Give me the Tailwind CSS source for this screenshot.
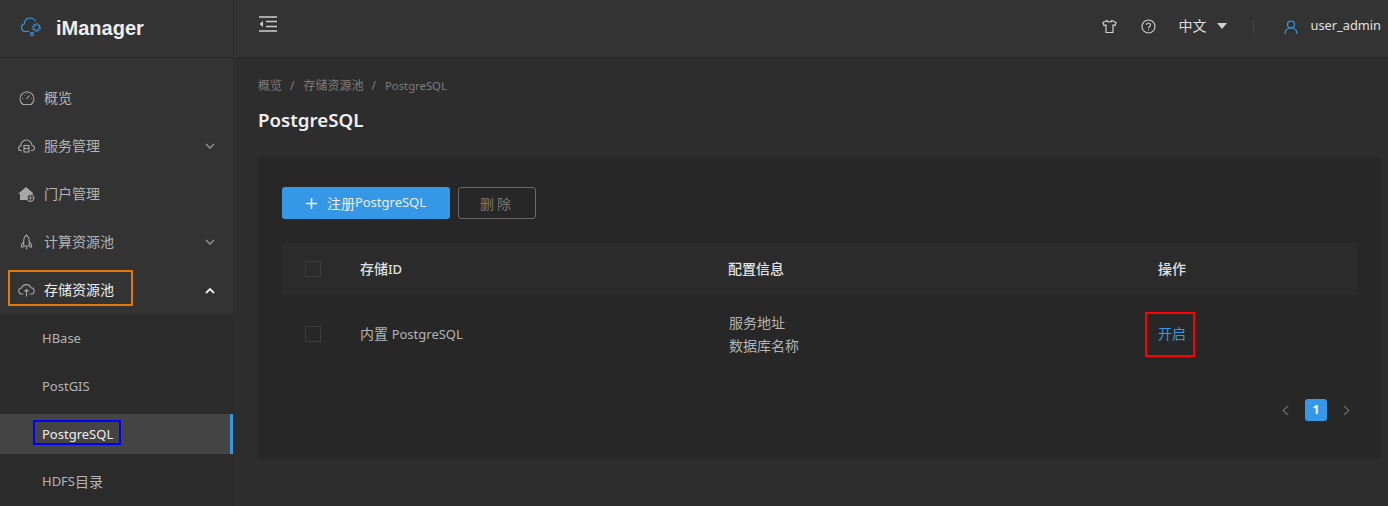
<!DOCTYPE html>
<html lang="zh">
<head>
    <meta charset="UTF-8">
    <title>iManager</title>
    <script src="https://cdn.jsdelivr.net/npm/@tailwindcss/browser@4"></script>
</head>
<body class="bg-[#2d2d2d] h-[506px] w-[1388px] overflow-hidden flex font-['Noto_Sans','Noto_Sans_CJK_SC',sans-serif] text-[13px]">
    <!-- Sidebar -->
    <aside class="w-[234px] h-[506px] shrink-0 bg-[#333333] border-r border-[#2b2b2b] flex flex-col">
        <div class="h-[58px] shrink-0 border-b border-[#2a2a2a] flex items-center pl-5 gap-[12px]">
            <svg class="mb-[3px]" width="24" height="20" viewBox="0 0 24 20" fill="none" stroke="#3498e6" stroke-width="1.100">
                <path d="M9 14.500H5a4 4 0 0 1-.6-7.800A5.800 5.800 0 0 1 15.500 4.500"/>
                <circle cx="16.500" cy="10.500" r="3.200" stroke-width="2.200" stroke-dasharray="1.600 0.800"/>
                <circle cx="12" cy="17" r="1.600"/>
            </svg>
            <span class="text-[20px] font-bold text-[#eeeeee] leading-none font-['Liberation_Sans',sans-serif] mb-[1px]">iManager</span>
        </div>
        <nav class="mt-4 flex flex-col text-[#b4b4b4] text-[14px]">
            <a class="h-12 flex items-center pl-[19px]">
                <svg class="mr-[9px]" width="16" height="16" viewBox="0 0 16 16" fill="none" stroke="#a8a8a8" stroke-width="1.100"><path d="M4 14.500A7 7 0 1 1 12 14.500Z"/><path d="M7.500 9l3-3.500M3.500 8.500h.8M11.800 8.500h.8M5 4.800l.5.500M8 3.200V4"/></svg>
                <span class="mb-[2px]">概览</span>
            </a>
            <a class="h-12 flex items-center pl-[18px] pr-[18px]">
                <svg class="mr-[9px]" width="17" height="16" viewBox="0 0 17 16" fill="none" stroke="#a8a8a8" stroke-width="1.100"><path d="M4 12.500H3a2.300 2.300 0 0 1-.3-4.600A5.500 5.500 0 0 1 14 7.500a2.500 2.500 0 0 1 0 5h-1"/><rect x="6" y="7.500" width="5" height="6.500"/><path d="M6 10.500h5"/></svg>
                <span class="mb-[2px]">服务管理</span>
                <svg class="ml-auto" width="10" height="7" viewBox="0 0 10 7" fill="none" stroke="#8a8a8a" stroke-width="1.600"><path d="M1 1l4 4 4-4"/></svg>
            </a>
            <a class="h-12 flex items-center pl-[18px] pr-[18px]">
                <svg class="mr-[9px]" width="17" height="16" viewBox="0 0 17 16"><path d="M0 8L8 1l7 6v1H13v6H2V8Z" fill="#a8a8a8"/><circle cx="12.500" cy="12" r="3.600" fill="#333" stroke="#a8a8a8"/><path d="M9 12h7M12.500 8.500v7" stroke="#a8a8a8" stroke-width=".8"/></svg>
                <span class="mb-[2px]">门户管理</span>
            </a>
            <a class="h-12 flex items-center pl-[18px] pr-[18px]">
                <svg class="mr-[9px]" width="17" height="16" viewBox="0 0 17 16" fill="none" stroke="#a8a8a8" stroke-width="1.100"><path d="M8.500 1c2 1.500 2.800 3.500 2.800 5.500V12H5.700V6.500C5.700 4.500 6.500 2.500 8.500 1Z"/><path d="M5.700 8L3.500 10.500V13h2.200M11.300 8l2.200 2.500V13h-2.200M8.500 13v2.500"/></svg>
                <span class="mb-[2px]">计算资源池</span>
                <svg class="ml-auto" width="10" height="7" viewBox="0 0 10 7" fill="none" stroke="#8a8a8a" stroke-width="1.600"><path d="M1 1l4 4 4-4"/></svg>
            </a>
            <a class="h-12 flex items-center pl-[18px] pr-[18px] text-[#eeeeee] relative">
                <svg class="mr-[9px]" width="17" height="16" viewBox="0 0 17 16" fill="none" stroke="#a8a8a8" stroke-width="1.100"><path d="M5.500 12H4a3 3 0 0 1-.4-6A5 5 0 0 1 13 5.800 3.100 3.100 0 0 1 13 12h-1.500"/><path d="M8.500 14.500V7.500M6.500 9.500l2-2 2 2"/></svg>
                <span class="mb-[2px]">存储资源池</span>
                <svg class="ml-auto" width="10" height="7" viewBox="0 0 10 7" fill="none" stroke="#eeeeee" stroke-width="1.800"><path d="M1 6l4-4 4 4"/></svg>
                <div class="absolute left-2 top-[4px] w-[125px] h-[36px] border-2 border-[#e5770f]"></div>
            </a>
            <div class="bg-[#2b2b2b] h-[192px] flex flex-col text-[13px]">
                <a class="h-12 flex items-center pl-[42px] pt-px">HBase</a>
                <a class="h-12 flex items-center pl-[42px] pt-px">PostGIS</a>
                <div class="h-12 flex items-center">
                    <a class="relative h-10 w-full flex items-center pl-[42px] pt-px bg-[#444444] border-r-[3px] border-[#3498e6] text-[#eeeeee]">PostgreSQL
                        <div class="absolute left-[33px] top-[6px] w-[88px] h-[25px] border-2 border-[#0000ff]"></div>
                    </a>
                </div>
                <a class="h-12 flex items-center pl-[42px] pb-px">HDFS<span class="text-[14px]">目录</span></a>
            </div>
        </nav>
    </aside>

    <div class="flex-1 flex flex-col min-w-0">
        <!-- Top bar -->
        <header class="h-[58px] shrink-0 bg-[#333333] border-b border-[#2a2a2a] flex items-center pl-[25px] pr-[7px] text-[#e0e0e0]">
            <svg class="mb-[10px]" width="18" height="16" viewBox="0 0 18 16" fill="none" stroke="#a8a8a8" stroke-width="2"><path d="M0 1h18M0 15h18"/><path d="M7 5.500h11M7 10.500h11" stroke="#cfcfcf" stroke-width="1.500"/><path d="M4 5v6L0.500 8Z" fill="#d0d0d0" stroke="none"/></svg>
            <svg class="ml-auto mb-[5px]" width="15" height="15" viewBox="0 0 15 15" fill="none" stroke="#d0d0d0" stroke-width="1.200"><path d="M5 1.500L1 3.500l1 3 2-.5V13.500h7V6l2 .5 1-3-4-2c-.5 2-4.500 2-5 0Z"/></svg>
            <svg class="ml-[24px] mb-[5px]" width="15" height="15" viewBox="0 0 15 15" fill="none" stroke="#d0d0d0" stroke-width="1.100"><circle cx="7.500" cy="7.500" r="6.500"/><path d="M5.500 6a2 2 0 1 1 3 1.700c-.7.400-1 .8-1 1.500M7.500 10.500v1"/></svg>
            <span class="ml-[23px] text-[14px] mb-[7px]">中文</span>
            <span class="ml-[10px] mb-[5px] w-0 h-0 border-x-[5.500px] border-x-transparent border-t-[6px] border-t-[#d0d0d0]"></span>
            <span class="ml-[26px] mb-[3px] w-px h-[15px] bg-[#444444]"></span>
            <svg class="ml-[30px] mb-[4px]" width="14" height="14" viewBox="0 0 14 14" fill="none" stroke="#3498e6" stroke-width="1.200"><circle cx="7" cy="4.500" r="3.500"/><path d="M1 14c0-4 2.500-6 6-6s6 2 6 6"/></svg>
            <span class="ml-[13px] mb-[5px] text-[12.800px]">user_admin</span>
        </header>

        <!-- Content -->
        <main class="pl-6 flex-1">
            <div class="mt-[19px] flex items-center text-[12px] text-[#7c7c7c] h-[18px]">
                <span>概览</span><span class="ml-2">/</span><span class="ml-[9px]">存储资源池</span><span class="ml-2">/</span><span class="ml-[9px] text-[11.300px]">PostgreSQL</span>
            </div>
            <h1 class="mt-[12px] text-[18.700px] leading-[26px] font-semibold text-[#eeeeee]">PostgreSQL</h1>
            <section class="mt-[24px] w-[1123px] h-[302px] bg-[#272727] rounded-[3px] pl-6 pt-[30px]">
                <div class="flex gap-2">
                    <button class="w-[168px] h-8 bg-[#3498e6] rounded-[3px] text-[#eeeeee] flex items-center justify-center">
                        <svg class="mr-[10px]" width="11" height="11" viewBox="0 0 11 11" stroke="#eeeeee" stroke-width="1.600"><path d="M5.500 0v11M0 5.500h11"/></svg>
                        <span class="text-[14px]">注册</span>PostgreSQL
                    </button>
                    <button class="w-[78px] h-8 border border-[#6a6a6a] rounded-[3px] text-[#777777] text-[14px] tracking-[3px]">删除</button>
                </div>
                <table class="mt-6 w-[1075px] table-fixed text-left border-collapse text-[14px]">
                    <thead>
                        <tr class="h-[52px] bg-[#2b2b2b] text-[#e0e0e0]">
                            <th class="w-[78px] font-medium pl-[23px]"><div class="w-4 h-4 border border-[#3d3d3d]"></div></th>
                            <th class="w-[368px] font-medium">存储<span class="text-[13px]">ID</span></th>
                            <th class="w-[430px] font-medium pb-[2px]">配置信息</th>
                            <th class="font-medium pb-[2px]">操作</th>
                        </tr>
                    </thead>
                    <tbody class="text-[#b4b4b4]">
                        <tr class="h-[78px]">
                            <td class="pl-[23px]"><div class="w-4 h-4 border border-[#3d3d3d]"></div></td>
                            <td>内置 <span class="text-[13px]">PostgreSQL</span></td>
                            <td class="leading-[23px] pl-px"><div>服务地址</div><div>数据库名称</div></td>
                            <td class="pb-[2px]"><div class="relative text-[#3498e6]">开启
                                <div class="absolute -left-[13px] -top-[11px] w-[50px] h-[45px] border-2 border-[#ff0000]"></div>
                            </div></td>
                        </tr>
                    </tbody>
                </table>
                <div class="mt-[26px] w-[1095px] pr-[26px] flex items-center justify-end gap-[15px]">
                    <svg width="9" height="11" viewBox="0 0 9 11" fill="none" stroke="#6a6a6a" stroke-width="1.200"><path d="M7 1L2 5.500 7 10"/></svg>
                    <span class="w-[22px] h-[22px] rounded-[3px] bg-[#3498e6] text-[#eeeeee] font-bold flex items-center justify-center">1</span>
                    <svg width="9" height="11" viewBox="0 0 9 11" fill="none" stroke="#6a6a6a" stroke-width="1.200"><path d="M2 1l5 4.500L2 10"/></svg>
                </div>
            </section>
        </main>
    </div>
</body>
</html>
